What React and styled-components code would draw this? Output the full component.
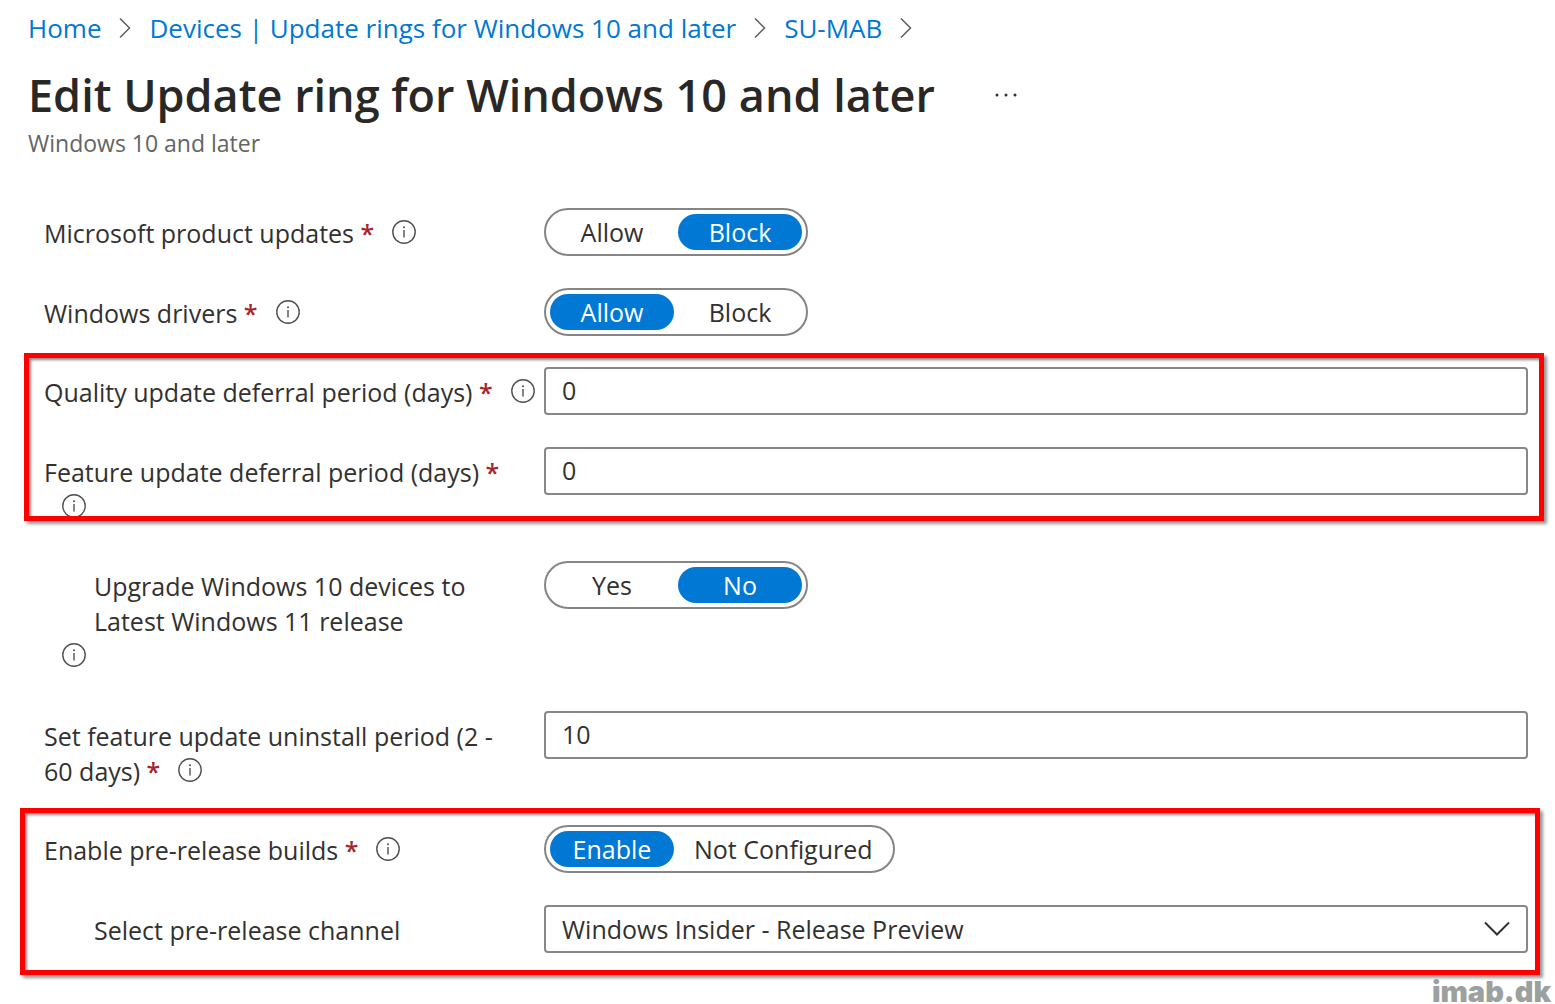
import React, { useState } from 'react'
import styled, { createGlobalStyle } from 'styled-components'

const GlobalStyle = createGlobalStyle`
  *, *::before, *::after {
    box-sizing: border-box;
  }
  body {
    margin: 0;
    background: #fff;
    color: #323130;
    font-family: 'Segoe UI', 'Open Sans', 'Noto Sans', sans-serif;
    font-size: 25px;
  }
  button, input, select {
    font: inherit;
    color: inherit;
  }
`

const crumbs = [
  'Home',
  'Devices | Update rings for Windows 10 and later',
  'SU-MAB'
]

const ChevronRight = () => (
  <svg width='12' height='20' viewBox='0 0 12 20' fill='none' aria-hidden='true'>
    <path d='M1 0.5 L10.5 10 L1 19.5' stroke='#605e5c' strokeWidth='1.5' />
  </svg>
)

const InfoButton = ({ about }) => (
  <Info type='button' aria-label={`Info: ${about}`}>
    <svg width='24' height='24' viewBox='0 0 24 24' fill='none' aria-hidden='true'>
      <circle cx='12' cy='12' r='11.2' stroke='#505050' strokeWidth='1.4' />
      <path d='M12 10 V17.5' stroke='#505050' strokeWidth='1.4' />
      <circle cx='12' cy='7.2' r='1' fill='#505050' />
    </svg>
  </Info>
)

const FieldLabel = ({ id, htmlFor, text, required, indent, info = true }) => (
  <LabelCell>
    <LabelText as={htmlFor ? 'label' : 'span'} id={id} htmlFor={htmlFor} $indent={indent}>
      {text}
      {required && <Required> *</Required>}
    </LabelText>
    {info && <InfoButton about={text} />}
  </LabelCell>
)

const ToggleField = ({ name, options, initial, ...label }) => {
  const [value, setValue] = useState(initial)
  return (
    <Row>
      <FieldLabel id={`${name}-label`} {...label} />
      <div>
        <Toggle role='radiogroup' aria-labelledby={`${name}-label`}>
          {options.map(option => (
            <Option key={option} $active={option === value}>
              <HiddenRadio
                type='radio'
                name={name}
                checked={option === value}
                onChange={() => setValue(option)}
              />
              {option}
            </Option>
          ))}
        </Toggle>
      </div>
    </Row>
  )
}

const NumberField = ({ name, initial, ...label }) => {
  const [value, setValue] = useState(initial)
  return (
    <Row>
      <FieldLabel htmlFor={name} {...label} />
      <Input
        id={name}
        type='text'
        inputMode='numeric'
        value={value}
        onChange={e => setValue(e.target.value)}
      />
    </Row>
  )
}

const App = () => (
  <>
    <GlobalStyle />
    <Page>
      <Header>
        <Breadcrumb aria-label='Breadcrumb'>
          {crumbs.map(crumb => (
            <React.Fragment key={crumb}>
              <Crumb href='#'>{crumb}</Crumb>
              <ChevronRight />
            </React.Fragment>
          ))}
        </Breadcrumb>
        <TitleRow>
          <Title>Edit Update ring for Windows 10 and later</Title>
          <MoreButton type='button' aria-label='More actions'>
            <svg width='22' height='4' viewBox='0 0 22 4' fill='#323130' aria-hidden='true'>
              <circle cx='2' cy='2' r='1.5' />
              <circle cx='11' cy='2' r='1.5' />
              <circle cx='20' cy='2' r='1.5' />
            </svg>
          </MoreButton>
        </TitleRow>
        <Subtitle>Windows 10 and later</Subtitle>
      </Header>

      <form>
        <Group>
          <ToggleField
            name='product-updates'
            text='Microsoft product updates'
            required
            options={['Allow', 'Block']}
            initial='Block'
          />
          <ToggleField
            name='drivers'
            text='Windows drivers'
            required
            options={['Allow', 'Block']}
            initial='Allow'
          />
        </Group>

        <DeferralBox>
          <NumberField
            name='quality-deferral'
            text='Quality update deferral period (days)'
            required
            initial='0'
          />
          <NumberField
            name='feature-deferral'
            text='Feature update deferral period (days)'
            required
            initial='0'
          />
        </DeferralBox>

        <UpgradeGroup>
          <ToggleField
            name='upgrade'
            text='Upgrade Windows 10 devices to Latest Windows 11 release'
            indent
            options={['Yes', 'No']}
            initial='No'
          />
          <NumberField
            name='uninstall-period'
            text={'Set feature update uninstall period (2 - 60\u00a0days)'}
            required
            initial='10'
          />
        </UpgradeGroup>

        <PreReleaseBox>
          <ToggleField
            name='pre-release'
            text='Enable pre-release builds'
            required
            options={['Enable', 'Not Configured']}
            initial='Enable'
          />
          <Row>
            <FieldLabel
              htmlFor='channel'
              text='Select pre-release channel'
              indent
              info={false}
            />
            <SelectWrap>
              <Select id='channel' defaultValue='preview'>
                <option value='preview'>Windows Insider - Release Preview</option>
                <option value='beta'>Beta Channel</option>
                <option value='dev'>Dev Channel</option>
              </Select>
              <svg width='26' height='16' viewBox='0 0 26 16' fill='none' aria-hidden='true'>
                <path d='M1 1.5 L13 13.5 L25 1.5' stroke='#323130' strokeWidth='2' />
              </svg>
            </SelectWrap>
          </Row>
        </PreReleaseBox>
      </form>

      <Watermark>imab.dk</Watermark>
    </Page>
  </>
)

export default App

const Page = styled.main`
  display: flex;
  flex-direction: column;
`

const Header = styled.header`
  padding: 9px 28px 48px;
`

const Breadcrumb = styled.nav`
  display: flex;
  align-items: center;
  gap: 18px;
  height: 38px;
`

const Crumb = styled.a`
  color: #0078d4;
  font-size: 26px;
  line-height: 36px;
  text-decoration: none;
  white-space: nowrap;
`

const TitleRow = styled.div`
  display: flex;
  align-items: center;
  gap: 52px;
  margin-top: 16px;
`

const Title = styled.h1`
  margin: 0;
  color: #292827;
  font-size: 45px;
  font-weight: 600;
  line-height: 64px;
`

const MoreButton = styled.button`
  display: flex;
  padding: 8px;
  border: 0;
  background: none;
`

const Subtitle = styled.p`
  margin: 0;
  color: #646464;
  font-size: 23px;
  line-height: 33px;
`

const Group = styled.div`
  display: flex;
  flex-direction: column;
  gap: 32px;
  margin: 0 27px 17px 44px;
`

const UpgradeGroup = styled(Group)`
  gap: 37px;
  margin-top: 40px;
  margin-bottom: 19px;
`

const Highlight = styled.div`
  display: flex;
  flex-direction: column;
  gap: 32px;
  border: 5px solid #f00;
  box-shadow: 3px 3px 3px #999, inset 2px 2px 3px #888;
`

const DeferralBox = styled(Highlight)`
  height: 168px;
  margin: 0 11px 0 24px;
  padding: 9px 11px 0 15px;
  overflow: hidden;
`

const PreReleaseBox = styled(Highlight)`
  margin: 0 15px 0 20px;
  padding: 12px 7px 17px 19px;
`

const Row = styled.div`
  display: grid;
  grid-template-columns: 496px minmax(0, 1fr);
  column-gap: 4px;
  align-items: start;
  min-height: 48px;

  ${Highlight} & {
    height: 48px;
  }
`

const LabelCell = styled.div`
  padding-top: 8px;
  line-height: 35px;
`

const LabelText = styled.span`
  display: ${({ $indent }) => ($indent ? 'inline-block' : 'inline')};
  padding-left: ${({ $indent }) => ($indent ? '50px' : '0')};
  vertical-align: top;
`

const Required = styled.span`
  color: #a4262c;
  font-weight: 600;
`

const Info = styled.button`
  display: inline-flex;
  margin: 4px 0 0 18px;
  padding: 0;
  border: 0;
  background: none;
  vertical-align: top;
`

const Toggle = styled.div`
  display: inline-flex;
  gap: 4px;
  height: 48px;
  padding: 4px;
  border: 2px solid #858585;
  border-radius: 24px;
`

const Option = styled.label`
  min-width: 124px;
  padding: 0 16px;
  border-radius: 18px;
  background: ${({ $active }) => ($active ? '#0078d4' : 'transparent')};
  color: ${({ $active }) => ($active ? '#fff' : '#323130')};
  font-weight: ${({ $active }) => ($active ? 500 : 400)};
  line-height: 36px;
  text-align: center;
  cursor: pointer;
`

const HiddenRadio = styled.input`
  position: absolute;
  width: 1px;
  height: 1px;
  margin: 0;
  opacity: 0;
`

const Input = styled.input`
  width: 100%;
  height: 48px;
  padding: 0 16px 2px;
  border: 2px solid #8a8886;
  border-radius: 4px;
  background: #fff;
`

const SelectWrap = styled.div`
  display: grid;
  align-items: center;

  > * {
    grid-area: 1 / 1;
  }
  > svg {
    justify-self: end;
    margin-right: 18px;
    pointer-events: none;
  }
`

const Select = styled(Input).attrs({ as: 'select' })`
  padding: 0 16px;
  appearance: none;
`

const Watermark = styled.footer`
  align-self: flex-end;
  padding: 5px 4px 0 0;
  color: #9ba19e;
  font-family: Inter, sans-serif;
  font-size: 29px;
  font-weight: 900;
  line-height: 24px;
`
